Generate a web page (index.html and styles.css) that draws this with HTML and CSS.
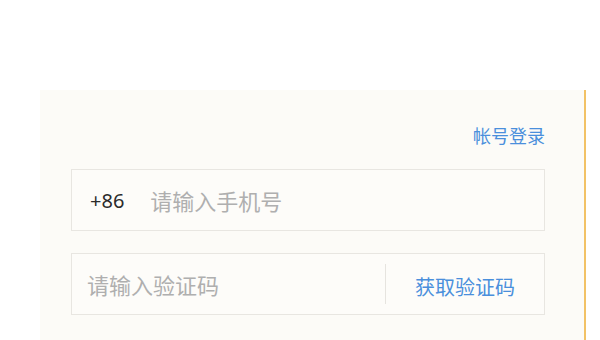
FILE: index.html
```html
<!DOCTYPE html>
<html lang="zh-CN">
<head>
<meta charset="utf-8">
<title>手机号登录</title>
<link rel="stylesheet" href="styles.css">
</head>
<body>
<div class="panel">
  <div class="switch-row"><a class="switch-link">帐号登录</a></div>
  <div class="field">
    <span class="prefix">+86</span>
    <span class="placeholder">请输入手机号</span>
  </div>
  <div class="field field-code">
    <span class="placeholder code-input">请输入验证码</span>
    <span class="divider"></span>
    <a class="get-code">获取验证码</a>
  </div>
</div>
</body>
</html>
```
FILE: styles.css
```css
html, body {
  margin: 0;
  padding: 0;
  background: #ffffff;
  font-family: "Noto Sans", "Noto Sans CJK SC", sans-serif;
}
.panel {
  margin: 90px 0 0 40px;
  width: 546px;
  height: 250px;
  box-sizing: border-box;
  background: #fcfbf7;
  border-right: 2px solid #f2c266;
  padding: 33px 39px 0 31px;
  display: flex;
  flex-direction: column;
}
.switch-row {
  display: flex;
  justify-content: flex-end;
  height: 24px;
  line-height: 24px;
  margin-bottom: 22px;
}
.switch-link {
  font-family: "Noto Sans CJK SC", sans-serif;
  font-size: 18px;
  color: #4a8fdc;
  margin-right: 0;
}
.field {
  height: 62px;
  box-sizing: border-box;
  border: 1px solid #e8e6e1;
  background: #fdfcf9;
  display: flex;
  align-items: center;
  padding-left: 18px;
}
.field + .field {
  margin-top: 22px;
}
.prefix {
  font-family: "Noto Sans", sans-serif;
  font-size: 20px;
  color: #2b2b2b;
  margin-right: 26px;
}
.placeholder {
  font-family: "Noto Sans CJK SC", sans-serif;
  font-size: 22px;
  color: #afafaf;
}
.field-code {
  padding-left: 15px;
  align-items: stretch;
}
.code-input {
  flex: 1;
  display: flex;
  align-items: center;
}
.divider {
  width: 1px;
  background: #e6e4df;
  margin: 10px 0;
}
.get-code {
  width: 158px;
  display: flex;
  align-items: center;
  justify-content: center;
  font-family: "Noto Sans CJK SC", sans-serif;
  font-size: 20px;
  color: #4a8fdc;
  padding-top: 4px;
  box-sizing: border-box;
}
```
